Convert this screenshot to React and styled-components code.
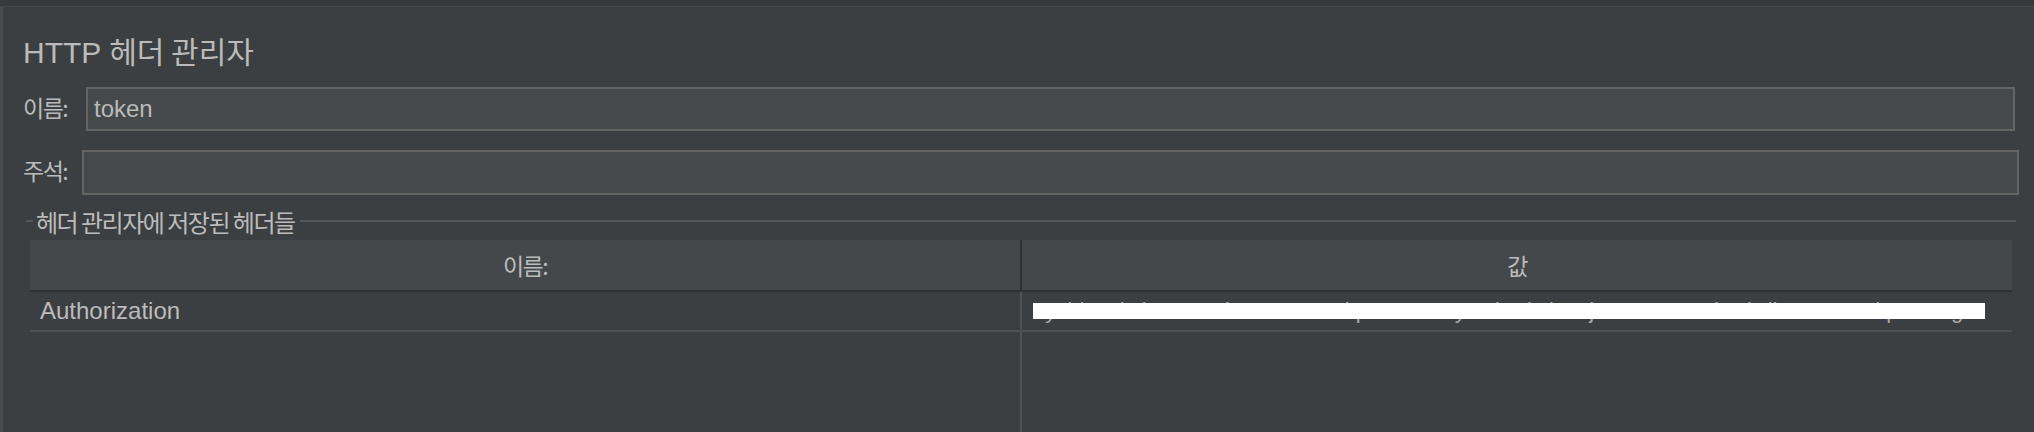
import React from "react";
import styled, { createGlobalStyle } from "styled-components";

const GlobalStyle = createGlobalStyle`
    html, body {
        margin: 0;
        padding: 0;
        background: #3c3f41;
    }
    body {
        width: 2034px;
        height: 432px;
        overflow: hidden;
        font-family: "Liberation Sans", "Noto Sans CJK KR", sans-serif;
        color: #bbbbbb;
    }
`;

const Window = styled.div`
    display: flex;
    flex-direction: column;
    width: 2034px;
    height: 432px;
    background: #3c3f41;
`;

const TopStrip = styled.div`
    height: 6px;
    background: #38393b;
    border-bottom: 1px solid #434547;
`;

const Panel = styled.div`
    flex: 1;
    display: flex;
    flex-direction: column;
    min-height: 0;
    border-left: 3px solid #4a4c4e;
    padding: 26px 14px 0 20px;
`;

const Title = styled.div`
    font-size: 30px;
    line-height: 34px;
    height: 34px;
    white-space: nowrap;
`;

const Ko = styled.span`
    font-family: "Noto Sans CJK KR", sans-serif;
    font-size: ${(p) => p.size || 23}px;
    letter-spacing: ${(p) => (p.spacing === undefined ? -1.5 : p.spacing)}px;
`;

const FieldRow = styled.div`
    display: flex;
    align-items: center;
    height: ${(p) => p.height}px;
    margin-top: ${(p) => p.top}px;
    padding-right: ${(p) => p.right}px;
`;

const Label = styled.label`
    width: ${(p) => p.width}px;
    flex: none;
    white-space: nowrap;
    line-height: 28px;
`;

const TextBox = styled.div`
    flex: 1;
    height: 100%;
    box-sizing: border-box;
    display: flex;
    align-items: center;
    padding-left: 6px;
    background: #45494a;
    border: 2px solid #646464;
    font-size: 24px;
    color: #bbbbbb;
`;

const Group = styled.div`
    flex: 1;
    display: flex;
    flex-direction: column;
    min-height: 0;
    margin: 12px 4px 0 3px;
`;

const GroupTitle = styled.div`
    display: flex;
    align-items: center;
    height: 28px;
    white-space: nowrap;
`;

const GroupLine = styled.div`
    height: 2px;
    background: #56595b;
    flex: ${(p) => (p.grow ? 1 : "none")};
    width: ${(p) => (p.grow ? "auto" : "7px")};
    margin: ${(p) => (p.grow ? "0 0 0 5px" : "0 3px 0 0")};
`;

const Table = styled.div`
    flex: 1;
    display: flex;
    flex-direction: column;
    min-height: 0;
    margin: 5px 4px 0 4px;
`;

const HeadRow = styled.div`
    display: grid;
    grid-template-columns: 1fr 1fr;
    column-gap: 2px;
    height: 50px;
    background: #2f3133;
    border-bottom: 2px solid #2f3133;
`;

const HeadCell = styled.div`
    display: flex;
    align-items: center;
    justify-content: center;
    background: #45484a;
`;

const BodyRow = styled.div`
    display: grid;
    grid-template-columns: 1fr 1fr;
    column-gap: 2px;
    background: #4e5153;
    height: ${(p) => (p.filler ? "auto" : "38px")};
    flex: ${(p) => (p.filler ? 1 : "none")};
    border-bottom: ${(p) => (p.filler ? "none" : "2px solid #4e5153")};
`;

const Cell = styled.div`
    position: relative;
    display: flex;
    align-items: center;
    min-width: 0;
    padding: 0 17px 0 ${(p) => p.left || 10}px;
    background: #3c3f41;
    font-size: 24px;
    overflow: hidden;
`;

const Clip = styled.span`
    flex: 1;
    min-width: 0;
    display: block;
    white-space: nowrap;
    overflow: hidden;
    text-overflow: ellipsis;
    color: #a9a9a9;
    font-size: 22px;
`;

const Redaction = styled.div`
    position: absolute;
    left: 11px;
    right: 27px;
    top: 11px;
    height: 16px;
    background: #ffffff;
`;

function App() {
    const token =
        "eyJhbGciOiJIUzI1NiIsInR5cCI6IkpXVCJ9.eyJzdWIiOiIxMjM0NTY3ODkwIiwibmFtZSI6IkpvaG4gRG9lIiwiaWF0IjoxNTE2MjM5MDIyfQ.SflKxwRJSMeKKF2QT4fwpMeJf36POk6yJV_adQssw5c";
    return (
        <Window>
            <GlobalStyle />
            <TopStrip />
            <Panel>
                <Title>
                    HTTP <Ko size={30} spacing={0}>헤더 관리자</Ko>
                </Title>

                <FieldRow height={44} top={20} right={5}>
                    <Label width={63}><Ko>이름:</Ko></Label>
                    <TextBox>token</TextBox>
                </FieldRow>

                <FieldRow height={45} top={19} right={1}>
                    <Label width={59}><Ko>주석:</Ko></Label>
                    <TextBox />
                </FieldRow>

                <Group>
                    <GroupTitle>
                        <GroupLine />
                        <Ko size={24}>헤더 관리자에 저장된 헤더들</Ko>
                        <GroupLine grow />
                    </GroupTitle>

                    <Table>
                        <HeadRow>
                            <HeadCell><Ko>이름:</Ko></HeadCell>
                            <HeadCell><Ko>값</Ko></HeadCell>
                        </HeadRow>
                        <BodyRow>
                            <Cell>Authorization</Cell>
                            <Cell left={11}>
                                <Clip>{token}</Clip>
                                <Redaction />
                            </Cell>
                        </BodyRow>
                        <BodyRow filler>
                            <Cell />
                            <Cell />
                        </BodyRow>
                    </Table>
                </Group>
            </Panel>
        </Window>
    );
}

export default App;
